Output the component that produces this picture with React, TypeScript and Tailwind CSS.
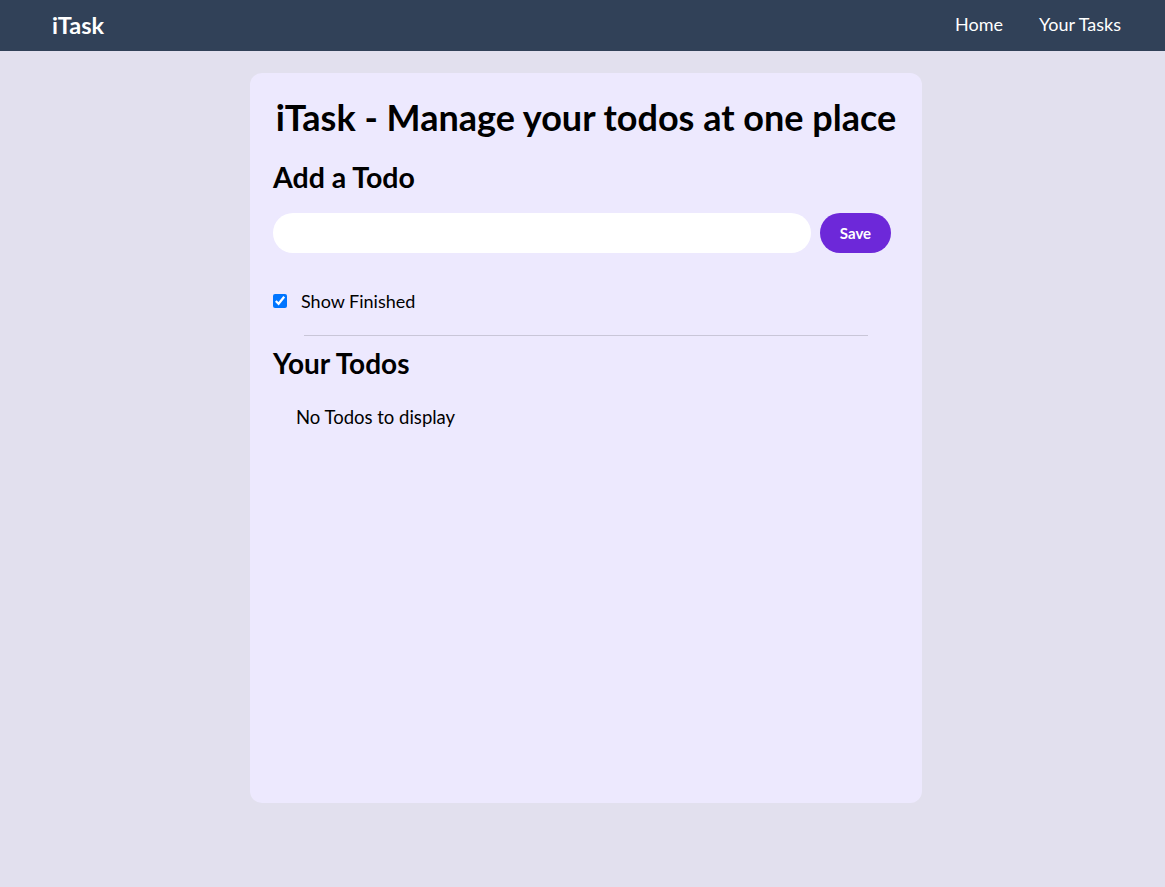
import { useState } from 'react';

export default function App() {
  const [todo, setTodo] = useState('');
  const [showFinished, setShowFinished] = useState(true);

  return (
    <div className="min-h-[887px] bg-[#e2e0ee] font-['Lato','Open_Sans',sans-serif] text-black">
      <nav className="flex h-[51px] items-center justify-between bg-slate-700 text-white">
        <div className="ml-[52px] text-[23.5px] font-bold">iTask</div>
        <ul className="mr-[44px] flex items-center gap-9 pb-[3px] text-lg">
          <li className="cursor-pointer">Home</li>
          <li className="cursor-pointer">Your Tasks</li>
        </ul>
      </nav>

      <main className="ml-[250px] mt-[22px] h-[730px] w-[672px] rounded-xl bg-violet-100 px-[23px] pt-[22px]">
        <h1 className="-mx-[23px] whitespace-nowrap text-center text-[36px] font-bold leading-[44px]">
          iTask - Manage your todos at one place
        </h1>

        <div className="mt-[20px]">
          <h2 className="text-[28.5px] font-bold leading-[36px]">Add a Todo</h2>
          <div className="mt-[18px] flex items-center">
            <input
              type="text"
              value={todo}
              onChange={(e) => setTodo(e.target.value)}
              className="h-10 w-[538px] rounded-full bg-white px-5 py-1 outline-none"
            />
            <button
              type="button"
              className="ml-[9px] h-10 w-[71px] rounded-full bg-[#6d28d9] text-[15px] font-bold text-white"
            >
              Save
            </button>
          </div>
        </div>

        <label className="mt-[34px] flex h-7 items-center gap-[14px] text-[18px]">
          <input
            type="checkbox"
            checked={showFinished}
            onChange={() => setShowFinished(!showFinished)}
            className="m-0 h-[14px] w-[14px]"
          />
          Show Finished
        </label>

        <div className="mx-auto mt-[20px] h-px w-[564px] bg-[#c9c6d8]" />

        <h2 className="mt-[9px] text-[28px] font-bold leading-[36px]">Your Todos</h2>

        <div className="ml-[23px] mt-[22px] text-[18.5px] leading-7">No Todos to display</div>
      </main>
    </div>
  );
}
